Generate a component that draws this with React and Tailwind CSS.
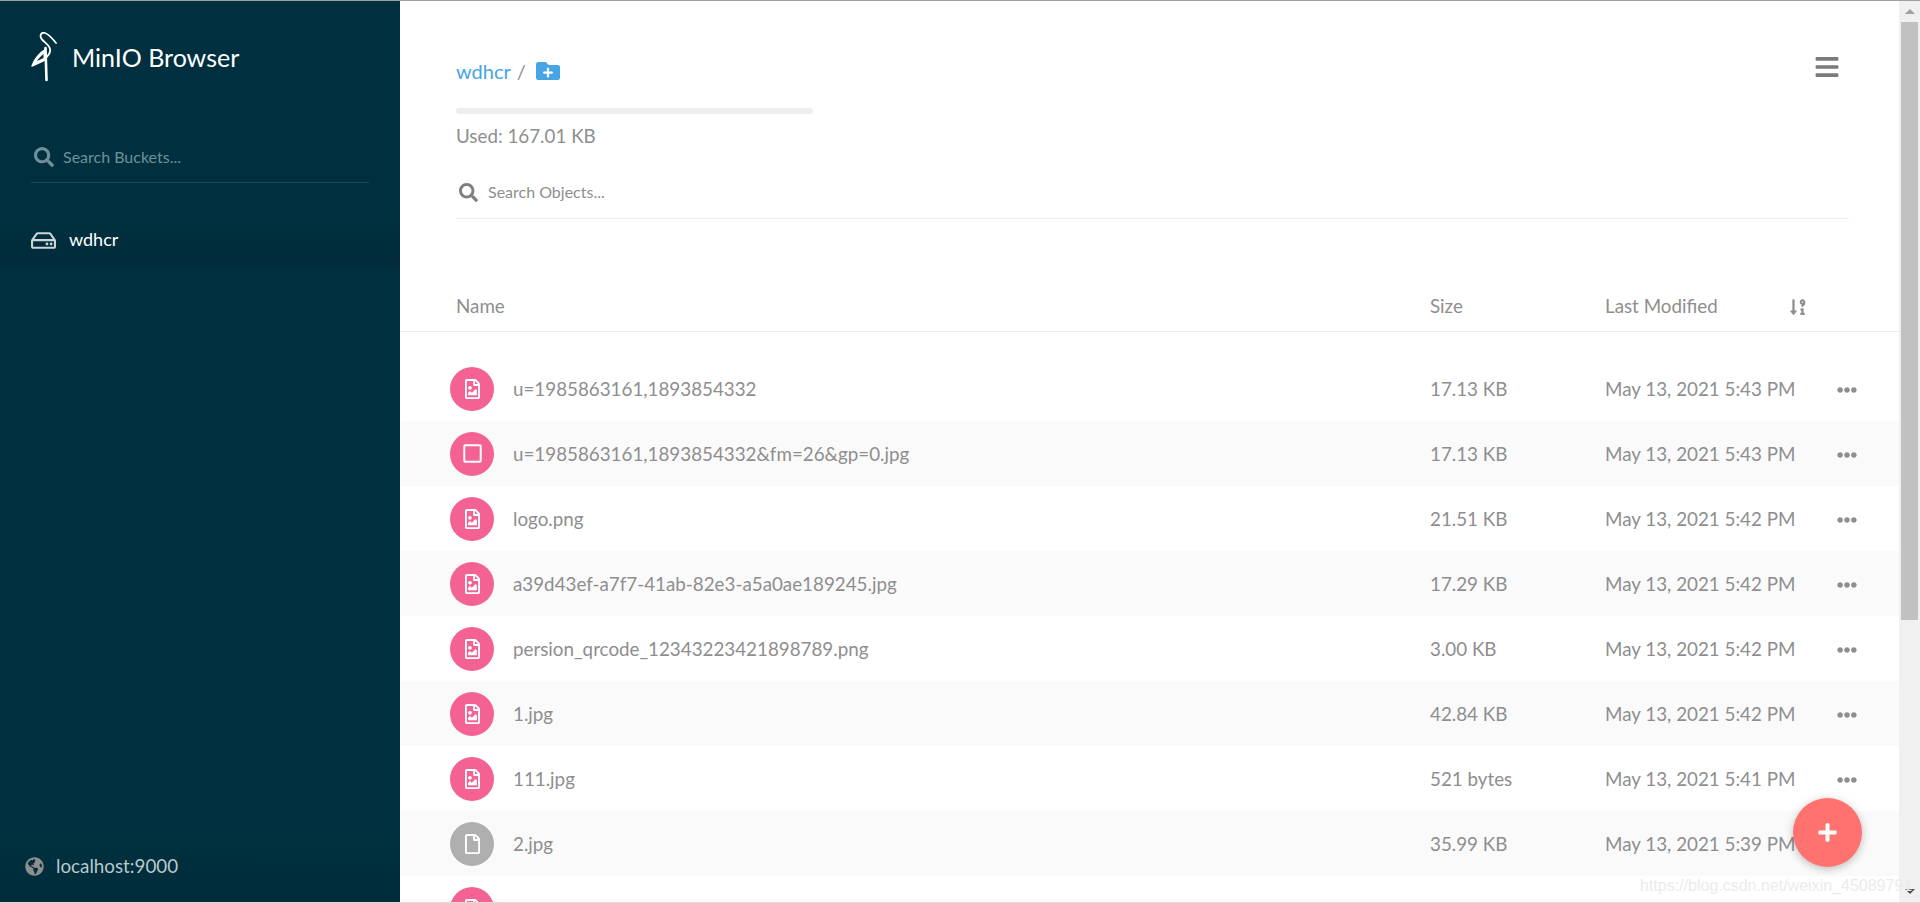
import { FaSearch, FaGlobeAmericas, FaPlus, FaBars, FaEllipsisH, FaFolderPlus, FaSortNumericDownAlt, FaRegFile, FaRegFileImage, FaRegSquare, FaRegHdd } from 'react-icons/fa';

const files = [
  { name: 'u=1985863161,1893854332', size: '17.13 KB', date: 'May 13, 2021 5:43 PM', type: 'image' },
  { name: 'u=1985863161,1893854332&fm=26&gp=0.jpg', size: '17.13 KB', date: 'May 13, 2021 5:43 PM', type: 'square' },
  { name: 'logo.png', size: '21.51 KB', date: 'May 13, 2021 5:42 PM', type: 'image' },
  { name: 'a39d43ef-a7f7-41ab-82e3-a5a0ae189245.jpg', size: '17.29 KB', date: 'May 13, 2021 5:42 PM', type: 'image' },
  { name: 'persion_qrcode_12343223421898789.png', size: '3.00 KB', date: 'May 13, 2021 5:42 PM', type: 'image' },
  { name: '1.jpg', size: '42.84 KB', date: 'May 13, 2021 5:42 PM', type: 'image' },
  { name: '111.jpg', size: '521 bytes', date: 'May 13, 2021 5:41 PM', type: 'image' },
  { name: '2.jpg', size: '35.99 KB', date: 'May 13, 2021 5:39 PM', type: 'file' },
  { name: '', size: '', date: '', type: 'image' },
];

const Bird = () => (
  <svg width="26" height="50" viewBox="0 0 26 50" fill="none" stroke="white" strokeLinecap="round" strokeLinejoin="round">
    <path d="M25 11 C21 6 17 2 14 1 C10 0 9 3 10 6 C12 10 18 12 19 17 C20 22 16 25 13 27" strokeWidth="1.8" />
    <path d="M14.5 16 L15.5 48" strokeWidth="2.6" />
    <path d="M14 18 C8 21 3 28 1 34 L14 28 Z" strokeWidth="1.4" fill="white" />
    <path d="M12.5 22 C9 25 7 27 6 29 L12.5 26 Z" fill="#00303f" stroke="none" />
  </svg>
);

const FileIcon = ({ type }) => (
  <div className={`w-[44px] h-[44px] rounded-full flex items-center justify-center text-white shrink-0 ${type === 'file' ? 'bg-[#afafaf]' : 'bg-[#f36292]'}`}>
    {type === 'image' && <FaRegFileImage className="w-[15px] h-[20px]" />}
    {type === 'square' && <FaRegSquare className="w-[19px] h-[21px]" />}
    {type === 'file' && <FaRegFile className="w-[15px] h-[20px]" />}
  </div>
);

export default function App() {
  return (
    <div className="h-[903px] w-full overflow-hidden flex flex-col bg-white text-[#8e8e8e] font-['Lato','Noto_Sans',sans-serif] relative">
      <div className="h-px bg-[#a0a0a0] shrink-0"></div>
      <div className="flex flex-1 min-h-0">
        {/* Sidebar */}
        <aside className="w-[400px] shrink-0 bg-[#00303f] flex flex-col text-white">
          <div className="flex items-center pl-[31px] pt-[31px]">
            <Bird />
            <span className="ml-[15px] text-[25px] leading-[30px]">MinIO Browser</span>
          </div>
          <div className="mx-[31px] mt-[54px] h-[47px] flex items-center border-b border-[#1f4a55] pb-[5px]">
            <FaSearch className="w-[20px] h-[20px] text-[#6f8f99] ml-[3px]" />
            <span className="ml-[9px] text-[16px] text-[#6f8f99]">Search Buckets...</span>
          </div>
          <div className="mt-[30px] h-[54px] bg-gradient-to-b from-[#00303f] to-[#002b3a] flex items-center pl-[31px]">
            <FaRegHdd className="w-[25px] h-[25px] text-[#ccd5d8]" />
            <span className="ml-[13px] text-[18px] mt-[-2px]">wdhcr</span>
          </div>
          <div className="mt-auto h-[72px] flex items-center pl-[25px] text-[#b8c8cc] bg-gradient-to-b from-[#00303f] to-[#002c3a]">
            <FaGlobeAmericas className="w-[19px] h-[19px] text-[#8e8e8e]" />
            <span className="ml-[12px] text-[18.8px]">localhost:9000</span>
          </div>
        </aside>

        {/* Main */}
        <main className="flex-1 min-w-0 overflow-hidden">
          <div className="pl-[56px] pr-[50px] pt-[54px] relative">
            <div className="flex items-center h-[32px]">
              <span className="text-[20px] text-[#46a5e5]">wdhcr</span>
              <span className="text-[20px] ml-[6px]">/</span>
              <FaFolderPlus className="ml-[9px] w-[26px] h-[24px] text-[#46a5e5]" />
            </div>
            <FaBars className="absolute top-[53px] right-[59px] w-[26px] h-[26px] text-[#7b7b7b]" />
            <div className="mt-[21px] w-[357px] h-[6px] bg-[#eeeeee] rounded"></div>
            <div className="mt-[8px] text-[18.8px] leading-[28px]">Used: 167.01 KB</div>
            <div className="mt-[19px] h-[50px] flex items-center border-b border-[#eeeeee] pb-[2px]">
              <FaSearch className="w-[19px] h-[19px] text-[#7f7f7f] ml-[3px]" />
              <span className="ml-[10px] text-[16px] mt-[-2px]">Search Objects...</span>
            </div>
          </div>
          <div className="mt-[65px] h-[48px] flex items-center border-b border-[#eeeeee] pl-[56px] text-[18.8px]">
            <span className="w-[974px] mt-[-2px]">Name</span>
            <span className="w-[175px] mt-[-2px]">Size</span>
            <span className="w-[184px] mt-[-2px]">Last Modified</span>
            <FaSortNumericDownAlt className="w-[18px] h-[18px] mt-[-1px]" />
          </div>
          <div className="mt-[24px]">
            {files.map((f, i) => (
              <div key={i} className={`h-[65px] flex items-center pl-[50px] text-[18.8px] ${i % 2 === 1 ? 'bg-[#fafafa]' : 'bg-white'}`}>
                <div className="w-[980px] flex items-center">
                  <FileIcon type={f.type} />
                  <span className="ml-[19px] mt-[2px]">{f.name}</span>
                </div>
                <span className="w-[175px] mt-[2px]">{f.size}</span>
                <span className="w-[232px] mt-[2px]">{f.date}</span>
                {f.date && <FaEllipsisH className="w-[20px] h-[20px] text-[#8e8e8e] mt-[2px]" />}
              </div>
            ))}
          </div>
        </main>

        {/* Scrollbar */}
        <div className="w-[21px] shrink-0 bg-[#f0f0f0] flex flex-col items-center">
          <div className="h-[21px] flex items-center justify-center">
            <div className="w-0 h-0 border-x-[5px] border-x-transparent border-b-[5px] border-b-[#a0a0a0]"></div>
          </div>
          <div className="w-[17px] h-[598px] bg-[#c1c1c1]"></div>
          <div className="mt-auto h-[21px] flex items-center justify-center">
            <div className="w-0 h-0 border-x-[5px] border-x-transparent border-t-[5px] border-t-[#505050]"></div>
          </div>
        </div>
      </div>
      <div className="h-px bg-[#e0dbd6] shrink-0"></div>

      {/* Add button */}
      <div className="absolute left-[1793px] top-[798px] w-[69px] h-[69px] rounded-full bg-[#ff726f] shadow-[0_2px_8px_rgba(0,0,0,0.25)] flex items-center justify-center">
        <FaPlus className="w-[21px] h-[21px] text-white" />
      </div>
      {/* Watermark */}
      <div className="absolute left-[1640px] top-[874px] text-[16px] text-[#ebebeb] font-['Liberation_Sans',sans-serif] whitespace-nowrap">https://blog.csdn.net/weixin_45089791</div>
    </div>
  );
}
